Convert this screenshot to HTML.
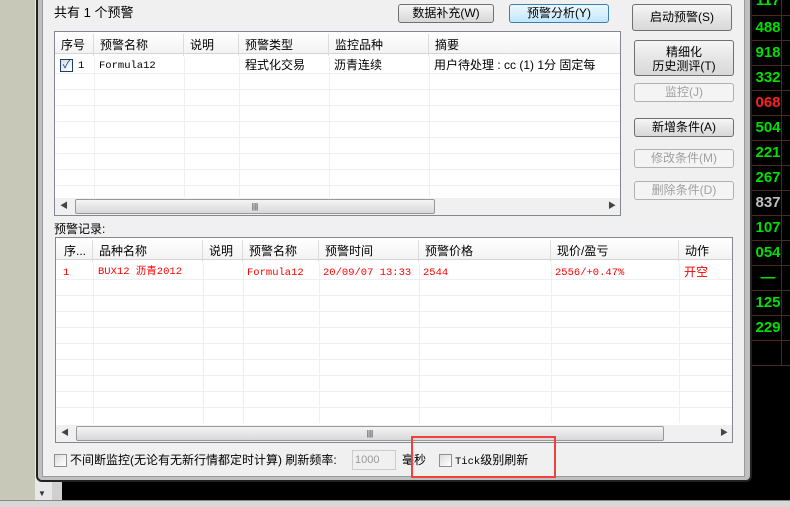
<!DOCTYPE html>
<html><head><meta charset="utf-8"><style>
*{box-sizing:border-box;margin:0;padding:0}
body{width:790px;height:507px;background:#000;position:relative;overflow:hidden;font-family:"Liberation Sans","Noto Sans CJK SC","WenQuanYi Zen Hei",sans-serif;font-size:12px;color:#000}
.a{position:absolute}
.btn{position:absolute;border:1px solid #707070;border-radius:3px;background:linear-gradient(#f6f6f6,#e6e6e6 50%,#d8d8d8);text-align:center;font-size:12px;line-height:16px}
.dis{color:#a0a0a0;border-color:#adb2b5;background:#f4f4f4}
.list{position:absolute;background:#fff;border:1px solid #828790}
.hd{position:absolute;top:2px;height:22px;border-bottom:1px solid #d5d5d5;background:linear-gradient(#fff,#f3f3f3)}
.hc{position:absolute;top:2px;height:22px;line-height:22px;padding-left:6px;border-right:1px solid #dcdcdc;font-size:12px}
.vl{position:absolute;width:1px;background:#efefef}
.hl{position:absolute;height:1px;background:#efefef}
.t{position:absolute;font-size:12px;line-height:16px;white-space:nowrap}
.m{font-family:"Liberation Mono",monospace;font-size:10.5px}
.sb{position:absolute;height:17px;background:#f0f0f0}
.num{position:absolute;left:754px;width:28px;font-family:"Liberation Sans",sans-serif;font-weight:bold;font-size:15px;color:#00e000;text-align:center;line-height:25px}
.rl{position:absolute;left:752px;width:38px;height:1px;background:#4a2a1a}
.cb{position:absolute;width:13px;height:13px;border:1px solid #8f8f8f;background:linear-gradient(135deg,#ddd,#fff)}
</style></head><body>
<div class="a" style="left:0;top:0;width:35px;height:500px;background:#c8c8b8"></div>
<div class="a" style="left:35px;top:0;width:17px;height:500px;background:#e8e8e8"></div>
<div class="a" style="left:52px;top:480px;width:10px;height:20px;background:#d0d0d0"></div>
<div class="a" style="left:38px;top:489px;color:#333;font-size:8px">▼</div>
<div class="a" style="left:0;top:500px;width:790px;height:7px;background:#d8d8d8;border-top:1px solid #888"></div>
<div class="a" style="left:748px;top:0;width:4px;height:365px;background:#3a3a3a"></div>
<div class="a" style="left:781px;top:0;width:1px;height:365px;background:#4a2a1a"></div>
<div class="num" style="top:-12px">117</div>
<div class="num" style="top:15px">488</div>
<div class="num" style="top:40px">918</div>
<div class="num" style="top:65px">332</div>
<div class="num" style="top:90px;color:#ff2020">068</div>
<div class="num" style="top:115px">504</div>
<div class="num" style="top:140px">221</div>
<div class="num" style="top:165px">267</div>
<div class="num" style="top:190px;color:#c0c0c0">837</div>
<div class="num" style="top:215px">107</div>
<div class="num" style="top:240px">054</div>
<div class="num" style="top:265px">—</div>
<div class="num" style="top:290px">125</div>
<div class="num" style="top:315px">229</div>
<div class="rl" style="top:15px"></div><div class="rl" style="top:40px"></div><div class="rl" style="top:65px"></div><div class="rl" style="top:90px"></div><div class="rl" style="top:115px"></div><div class="rl" style="top:140px"></div><div class="rl" style="top:165px"></div><div class="rl" style="top:190px"></div><div class="rl" style="top:215px"></div><div class="rl" style="top:240px"></div><div class="rl" style="top:265px"></div><div class="rl" style="top:290px"></div><div class="rl" style="top:315px"></div><div class="rl" style="top:340px"></div><div class="rl" style="top:365px"></div>
<div class="a" style="left:36px;top:0;width:716px;height:482px;background:#bfbfbf;border:2px solid #222;border-top:none;border-radius:0 0 6px 6px"></div>
<div class="a" style="left:42px;top:0;width:703px;height:477px;background:#f0f0f0;border:1px solid #9a9a9a;border-top:none"></div>
<div class="t" style="left:54px;top:5px;font-size:13px">共有 1 个预警</div>
<div class="btn" style="left:398px;top:4px;width:96px;height:19px">数据补充(W)</div>
<div class="btn" style="left:509px;top:4px;width:100px;height:19px;border-color:#3c7fb1;background:linear-gradient(#eaf6fd,#d9f0fc 50%,#bee6fd)">预警分析(Y)</div>
<div class="btn" style="left:632px;top:4px;width:100px;height:27px;line-height:25px">启动预警(S)</div>
<div class="btn" style="left:634px;top:40px;width:100px;height:36px;line-height:14px;padding-top:4px">精细化<br>历史测评(T)</div>
<div class="btn dis" style="left:634px;top:83px;width:100px;height:19px">监控(J)</div>
<div class="btn" style="left:634px;top:118px;width:100px;height:19px">新增条件(A)</div>
<div class="btn dis" style="left:634px;top:149px;width:100px;height:19px">修改条件(M)</div>
<div class="btn dis" style="left:634px;top:181px;width:100px;height:19px">删除条件(D)</div>
<div class="list" style="left:54px;top:31px;width:567px;height:185px;overflow:hidden">
 <div class="hd" style="left:0;top:0;width:565px"></div>
 <div class="hc" style="left:0;width:39px">序号</div>
 <div class="hc" style="left:39px;width:90px">预警名称</div>
 <div class="hc" style="left:129px;width:55px">说明</div>
 <div class="hc" style="left:184px;width:90px">预警类型</div>
 <div class="hc" style="left:274px;width:100px">监控品种</div>
 <div class="hc" style="left:374px;width:191px;border:none">摘要</div>
 <div class="vl" style="left:39px;top:25px;height:140px"></div><div class="vl" style="left:129px;top:25px;height:140px"></div><div class="vl" style="left:184px;top:25px;height:140px"></div><div class="vl" style="left:274px;top:25px;height:140px"></div><div class="vl" style="left:374px;top:25px;height:140px"></div>
 <div class="hl" style="left:0;top:41px;width:565px"></div><div class="hl" style="left:0;top:57px;width:565px"></div><div class="hl" style="left:0;top:73px;width:565px"></div><div class="hl" style="left:0;top:89px;width:565px"></div><div class="hl" style="left:0;top:105px;width:565px"></div><div class="hl" style="left:0;top:121px;width:565px"></div><div class="hl" style="left:0;top:137px;width:565px"></div><div class="hl" style="left:0;top:153px;width:565px"></div>
 <div class="cb" style="left:5px;top:27px;border-color:#1c3d6e;color:#2040a0;font-size:11px;line-height:11px;text-align:center">✓</div>
 <div class="t m" style="left:23px;top:26px">1</div>
 <div class="t m" style="left:44px;top:26px">Formula12</div>
 <div class="t" style="left:190px;top:25px">程式化交易</div>
 <div class="t" style="left:279px;top:25px">沥青连续</div>
 <div class="t" style="left:379px;top:25px">用户待处理 : cc (1) 1分 固定每</div>
 <div class="sb" style="left:0;top:166px;width:565px"></div>
 <div class="a" style="left:20px;top:167px;width:360px;height:15px;border:1px solid #999;border-radius:2px;background:linear-gradient(#f4f4f4,#d8d8d8);text-align:center;font-size:8px;line-height:13px">|||</div>
 <div class="t" style="left:5px;top:166px;font-size:8px;color:#444">◀</div>
 <div class="t" style="left:553px;top:166px;font-size:8px;color:#444">▶</div>
</div>
<div class="t" style="left:54px;top:221px">预警记录:</div>
<div class="list" style="left:55px;top:237px;width:678px;height:206px;overflow:hidden">
 <div class="hd" style="left:0;top:0;width:676px"></div>
 <div class="hc" style="left:2px;width:35px">序...</div>
 <div class="hc" style="left:37px;width:110px">品种名称</div>
 <div class="hc" style="left:147px;width:40px">说明</div>
 <div class="hc" style="left:187px;width:76px">预警名称</div>
 <div class="hc" style="left:263px;width:100px">预警时间</div>
 <div class="hc" style="left:363px;width:132px">预警价格</div>
 <div class="hc" style="left:495px;width:128px">现价/盈亏</div>
 <div class="hc" style="left:623px;width:53px;border:none">动作</div>
 <div class="vl" style="left:37px;top:25px;height:160px"></div><div class="vl" style="left:147px;top:25px;height:160px"></div><div class="vl" style="left:187px;top:25px;height:160px"></div><div class="vl" style="left:263px;top:25px;height:160px"></div><div class="vl" style="left:363px;top:25px;height:160px"></div><div class="vl" style="left:495px;top:25px;height:160px"></div><div class="vl" style="left:623px;top:25px;height:160px"></div>
 <div class="hl" style="left:0;top:41px;width:676px"></div><div class="hl" style="left:0;top:57px;width:676px"></div><div class="hl" style="left:0;top:73px;width:676px"></div><div class="hl" style="left:0;top:89px;width:676px"></div><div class="hl" style="left:0;top:105px;width:676px"></div><div class="hl" style="left:0;top:121px;width:676px"></div><div class="hl" style="left:0;top:137px;width:676px"></div><div class="hl" style="left:0;top:153px;width:676px"></div><div class="hl" style="left:0;top:169px;width:676px"></div>
 <div style="color:#f00">
 <div class="t m" style="left:7px;top:27px">1</div>
 <div class="t m" style="left:42px;top:26px">BUX12 沥青2012</div>
 <div class="t m" style="left:191px;top:27px">Formula12</div>
 <div class="t m" style="left:267px;top:27px">20/09/07 13:33</div>
 <div class="t m" style="left:367px;top:27px">2544</div>
 <div class="t m" style="left:499px;top:27px">2556/+0.47%</div>
 <div class="t" style="left:628px;top:26px">开空</div>
 </div>
 <div class="sb" style="left:0;top:187px;width:676px"></div>
 <div class="a" style="left:20px;top:188px;width:588px;height:15px;border:1px solid #999;border-radius:2px;background:linear-gradient(#f4f4f4,#d8d8d8);text-align:center;font-size:8px;line-height:13px">|||</div>
 <div class="t" style="left:5px;top:187px;font-size:8px;color:#444">◀</div>
 <div class="t" style="left:664px;top:187px;font-size:8px;color:#444">▶</div>
</div>
<div class="cb" style="left:54px;top:454px"></div>
<div class="t" style="left:70px;top:452px">不间断监控(无论有无新行情都定时计算) 刷新频率:</div>
<div class="a" style="left:352px;top:450px;width:44px;height:20px;border:1px solid #ccc;background:#f0f0f0;color:#999;font-size:11px;line-height:18px;padding-left:2px">1000</div>
<div class="t" style="left:402px;top:452px">毫秒</div>
<div class="cb" style="left:439px;top:454px"></div>
<div class="t" style="left:455px;top:452px"><span class="m">Tick</span>级别刷新</div>
<div class="a" style="left:411px;top:436px;width:145px;height:42px;border:2px solid #f04040"></div>
</body></html>
